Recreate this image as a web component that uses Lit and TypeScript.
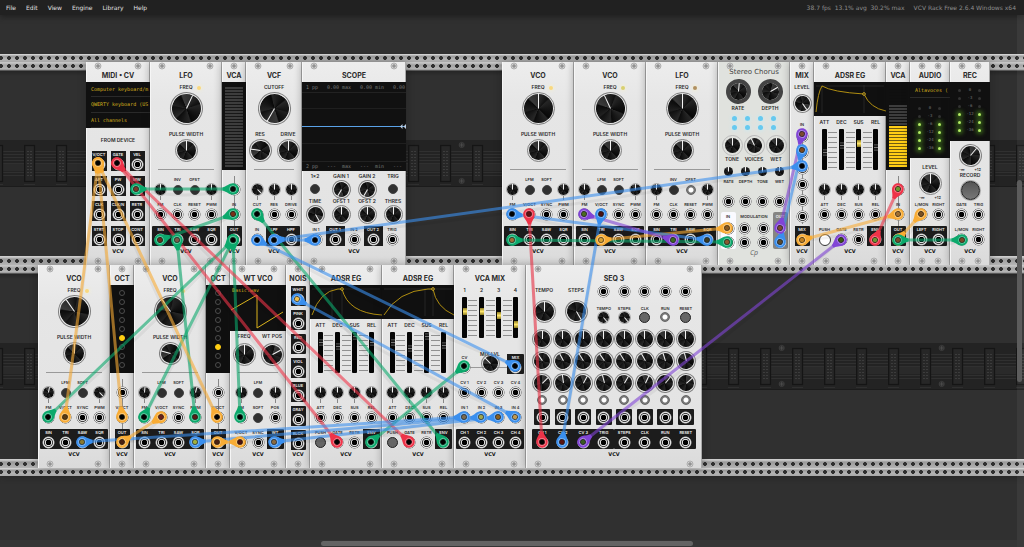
import { LitElement, html, svg, css, nothing } from "lit";
import { customElement } from "lit/decorators.js";

type T = unknown;

const BLUE = "#3a8fee";
const GREEN = "#0ca96c";
const RED = "#ee3348";
const ORANGE = "#f8ac35";
const PURPLE = "#8144d6";

/* x1, y1, x2, y2, colour, light in first plug, light in second plug */
type Cable = [number, number, number, number, string, string?, string?];
const cables: Cable[] = [
  [136, 189, 233, 189, GREEN, "#7a3a2a", "#0a0a0a"],
  [160, 240, 233, 214, GREEN, "#6a2a1a", "#7a3018"],
  [177, 240, 195, 417, GREEN, "#7a5a4a", "#5a1a14"],
  [233, 240, 48, 417, GREEN],
  [233, 240, 144, 417, GREEN],
  [233, 240, 240, 417, GREEN],
  [257, 214, 443, 442, GREEN],
  [371, 442, 464, 366, GREEN],
  [117, 163, 337, 442, RED],
  [117, 163, 409, 442, RED],
  [98, 163, 65, 417, ORANGE, "#000", "#5a3a10"],
  [98, 163, 217, 417, ORANGE],
  [98, 163, 122, 417, ORANGE],
  [122, 442, 161, 417, ORANGE, "#4a2010", "#6a2018"],
  [217, 442, 240, 442, ORANGE, "#4a2010", "#4a1010"],
  [297, 299, 515, 417, BLUE, "#f0c050", "#c09a50"],
  [257, 240, 515, 366, BLUE],
  [274, 240, 802, 166, BLUE],
  [274, 240, 315, 240, BLUE],
  [82, 442, 464, 417, BLUE, "#8a7a30", "#7a6a50"],
  [195, 442, 481, 417, BLUE, "#a0b040", "#a0a850"],
  [274, 442, 498, 417, BLUE, "#8a6a40", "#8a6020"],
  [529, 214, 542, 442, RED, "#5a1010", "#000"],
  [601, 214, 562, 442, BLUE, "#4a1010", "#5a1410"],
  [512, 240, 727, 242, GREEN, "#a07038", "#8a5a30"],
  [601, 240, 727, 228, ORANGE, "#d8a030", "#8a5a20"],
  [512, 214, 707, 240, BLUE, "#000", "#3a3a20"],
  [584, 214, 673, 240, PURPLE, "#4a6a20", "#3a6a20"],
  [780, 242, 802, 150, BLUE, "#5a4a30", "#7a4a20"],
  [780, 228, 802, 134, PURPLE, "#7a4a30", "#7a4a30"],
  [802, 240, 898, 214, ORANGE, "#c08020", "#a07030"],
  [898, 189, 875, 240, RED, "#6a9a30", "#6a9a30"],
  [898, 240, 921, 214, ORANGE, "#7a5020", "#7a5020"],
  [898, 240, 962, 240, GREEN, "#7a4a28", "#7a4a28"],
  [841, 240, 583, 442, PURPLE, "#3a5a10", "#3a5a20"],
];

const plug = (x: number, y: number, deg: number, color: string, light = "#000") => svg`
  <g transform="translate(${x} ${y}) rotate(${deg})">
    <path d="M0 -5.8 C4 -5.8 6 -2.8 10.500 -1.6 L10.500 1.6 C6 2.8 4 5.8 0 5.8 A5.8 5.8 0 0 1 0 -5.8Z" fill=${color}/>
    <circle r="3.4" fill="none" stroke="#fff" stroke-opacity=".35" stroke-width="1"/>
    <circle r="2.6" fill=${light} stroke="#1b1b1b" stroke-width=".6"/>
  </g>`;

const label = (t: string, cls = "") => html`<span class="label ${cls}">${t}</span>`;
const knob = (size: string, angle: number, name = "Attenuator") => html`
  <input class="knob ${size}" type="range" min="-150" max="150" .value=${String(angle)}
    aria-label=${name} style="rotate:${angle}deg" />`;
const jack = () => html`<span class="jack"></span>`;
const button = (cls: string, name: string) => html`<button class="push ${cls}" aria-label=${name}></button>`;
const cell = (name: string, body: T, cls = "") => html`
  <div class="cell ${cls}">${label(name)}<div class="body">${body}</div></div>`;
const jacks = (names: string[], cls = "") => names.map((n, i) =>
  cell(n, jack(), cls + (cls && i === 0 ? " first" : "") + (cls && i === names.length - 1 ? " last" : "")));
const screws = (n: number) => html`<div class="screws ${n === 1 ? "one" : ""}">
  ${Array.from({ length: n }, () => html`<svg viewBox="0 0 8 8"><circle cx="4" cy="4" r="3" fill="#d2d2d2" stroke="#9d9d9d" stroke-width=".7"/><path d="M4 2V6M2 4H6" stroke="#777" stroke-width=".9"/></svg>`)}</div>`;

const panel = (hp: string, title: string, face: T, ports: T, n = 2) => html`
  <section class="module ${hp}" aria-label=${title}>
    ${screws(n)}
    <h2>${title}</h2>
    <div class="face">${face}</div>
    ${ports}
    <div class="logo">VCV</div>
    ${screws(n)}
  </section>`;

const freq = (a: number, led: string) => html`
  <div class="freq"><span></span>${label("FREQ", "mid")}<i class="led ${led}"></i></div>
  <div class="well">${knob("xl", a, "Frequency")}</div>`;
const rule = () => html`<hr />`;

const osc = (title: string, a: number, pw: number, led: string, o: { lfo?: boolean; am?: number; pm?: number; lit?: boolean } = {}) =>
  panel("w9", title, html`
    ${freq(a, led)}
    ${label("PULSE WIDTH", "mid second")}
    <div class="well small">${knob("l", pw, "Pulse width")}</div>
    ${rule()}`, html`
    <div class="ports c4">
      ${cell("", knob("s", o.am ?? 0), "stem")}
      ${cell(o.lfo ? "INV" : "LFM", button("dark", o.lfo ? "Invert" : "Linear FM"))}
      ${cell(o.lfo ? "OFST" : "SOFT", button(o.lit ? "lit" : "dark", o.lfo ? "Offset" : "Soft sync"))}
      ${cell("", knob("s", o.pm ?? 0), "stem")}
      ${jacks(o.lfo ? ["FM", "CLK", "RESET", "PWM"] : ["FM", "V/OCT", "SYNC", "PWM"])}
      ${jacks(["SIN", "TRI", "SAW", "SQR"], "out")}
    </div>`);

const vca = (lit: boolean) => panel("w3", "VCA", html`
  <div class="screen tall"><div class="meter ${lit ? "on" : ""}"></div></div>`, html`
  <div class="ports c1 wire">${cell("", jack())}${cell("IN", jack())}${cell("OUT", jack(), "out first last")}</div>`, 1);

const oct = (sel: number) => panel("w3", "OCT", html`
  <div class="screen tall octaves">
    ${Array.from({ length: 9 }, (_, i) => html`<button class="oct ${i === sel ? "sel" : ""}" aria-label="Octave ${4 - i}"></button>`)}
  </div>`, html`
  <div class="ports c1 wire">${cell("", jack())}${cell("V/OCT", jack())}${cell("OUT", jack(), "out first last")}</div>`, 1);

const slider = (name: string, v: number, lit = false) => html`
  <label class="slide"><span class="label mid">${name}</span>
    <input class="fader ${lit ? "lit" : ""}" type="range" min="0" max="100" .value=${String(v)} /></label>`;
const ticks = () => html`<div class="ticks"><i></i><i></i><i></i></div>`;

const adsr = (curve: string, dot: [number, number], marks: number[], v: number[], litIdx: number, push: string) => panel("w9", "ADSR EG", html`
  <div class="screen env">
    <svg viewBox="0 0 72 34">
      <path d="M2 4H70" stroke="#333" stroke-width=".6"/>
      ${marks.map((m) => svg`<path d="M${m} 3V31" stroke="#333" stroke-width=".6"/>`)}
      <path d=${curve} fill="none" stroke="#b08e10" stroke-width="1"/>
      <circle cx=${dot[0]} cy=${dot[1]} r="1.4" fill="#463a10" stroke="#e5bd2a" stroke-width=".7"/>
    </svg>
  </div>
  <div class="faders eg">${ticks()}${["ATT", "DEC", "SUS", "REL"].map((n, i) => slider(n, v[i], i === litIdx))}</div>`, html`
  <div class="ports c4">
    ${[0, 0, 0, 0].map(() => cell("", knob("s", 0), "stem"))}
    ${jacks(["ATT", "DEC", "SUS", "REL"])}
    ${cell("PUSH", button(push, "Push"))}${jacks(["GATE", "RETR"])}${cell("ENV", jack(), "out first last")}
  </div>`);

const ladder = (from: number) => html`<div class="ladder">
  ${["0", "-3", "-6", "-12", "-24", "-36"].map((t, i) => html`<div><i class=${i >= from ? "hot" : ""}></i><span>${t}</span><i class=${i >= from ? "hot" : ""}></i></div>`)}</div>`;

const menus = ["File", "Edit", "View", "Engine", "Library", "Help"];

@customElement("app-root")
export class AppRoot extends LitElement {
  static styles = css`
    :host { display: flex; flex-direction: column; position: relative; min-height: 100vh; overflow: hidden; background: #303030; color: #2c2c2c; font-family: Inter, "Open Sans", sans-serif; font-size: 5px; }
    * { box-sizing: border-box; }
    button, input { margin: 0; padding: 0; border: 0; font: inherit; }
    .bar { display: flex; align-items: center; height: 15px; padding: 0 8px 0 1px; background: #212121; box-shadow: 0 1px 6px #1b1b1b; color: #e0e0e0; font: 6px/15px "DejaVu Sans", sans-serif; }
    .bar nav { display: flex; flex: 1; }
    .bar nav button { padding: 0 5px; background: none; color: inherit; }
    .stats { display: flex; gap: 9px; color: #8e8e8e; white-space: pre; }
    .rack { padding-top: 39px; }
    .rail { height: 8px; background: radial-gradient(circle at 4px 4px, #303030 0 1.6px, #30303000 2.2px) -3px 0 / 8px 8px repeat-x, linear-gradient(#d0d0d0 0 1px, #969696 2px, #b4b4b4 5px, #a8a8a8); }
    .rail.under { box-shadow: 0 2px 5px #2228; }
    .row { position: relative; display: flex; height: 203px; background:
      radial-gradient(circle at 4px 4px, #303030 0 1.6px, #30303000 2.2px) -3px 0 / 8px 8px repeat-x,
      radial-gradient(circle at 4px 4px, #303030 0 1.6px, #30303000 2.2px) -3px 195px / 8px 8px repeat-x,
      linear-gradient(#c4c4c4 0 1px, #a2a2a2 3px, #b6b6b6 7px, #8a8a8a 8px, #262626 9px, #303030 14px, #303030 194px, #ccc 194px 195px, #999 197px, #b6b6b6 203px); }
    .row.a { padding-left: 86px; }
    .row.b { padding-left: 38px; }
    .backplane { position: absolute; inset: 0; width: 100%; height: 100%; }
    .gap { flex: 0 0 96px; }
    .module { position: relative; display: flex; flex-direction: column; flex: none; height: 203px; background: linear-gradient(#ededed, #e6e6e6 20%, #e3e3e3 80%, #dadada); border-left: 1px solid #f6f6f6; border-right: 1px solid #a9a9a9; box-shadow: 0 0 8px #1115; }
    .w3 { width: 24px; } .w5 { width: 40px; } .w7 { width: 56px; } .w8 { width: 64px; } .w9 { width: 72px; } .w13 { width: 104px; } .w22 { width: 176px; }
    .screws { display: flex; justify-content: space-between; height: 8px; padding: 0 7px; }
    .screws.one { justify-content: center; }
    .screws svg { width: 8px; height: 8px; }
    h2 { margin: 0; height: 12px; font-size: 7px; line-height: 11px; font-weight: 700; text-align: center; white-space: nowrap; }
    .face { flex: 1; display: flex; flex-direction: column; min-height: 0; }
    .logo { height: 11px; font: 700 5px/10px "DejaVu Sans", sans-serif; text-align: center; color: #111; }
    .label { display: block; height: 7px; font-size: 4px; line-height: 7px; font-weight: 600; text-align: center; white-space: nowrap; }
    .mid { font-size: 5px; }
    .second { margin-top: 5px; }
    .second0 { margin-top: 2px; }
    .freq { display: grid; grid-template-columns: 1fr auto 1fr; align-items: center; margin-top: 2px; }
    .led { width: 4px; height: 4px; margin-left: 4px; border-radius: 50%; background: #e8d890; box-shadow: 0 0 4px #fff3b8; }
    .led.amber { background: #b09060; } .led.gold { background: #f8d880; } .led.lime { background: #d8d070; }
    .well { display: grid; place-items: center; height: 35px; }
    .well.small { height: 25px; }
    .pair { display: grid; grid-template-columns: 28px 28px; justify-content: center; }
    hr { width: 56px; height: 1px; margin: 6px auto 0; border: 0; background: #999; }
    .w7 hr { width: 40px; }
    .knob { appearance: none; display: block; flex: none; border-radius: 50%; outline: 1px solid #808080; outline-offset: 1px; background:
      linear-gradient(#f4f4f4, #f4f4f4) 50% 0 / 1px 50% no-repeat,
      conic-gradient(#2c2c2c, #111 12%, #252525 14%, #141414 26%, #080808 37%, #262626 39%, #0c0c0c 55%, #272727 57%, #111 70%, #202020 72%, #0b0b0b 86%, #3a3a3a 88%, #2c2c2c); }
    .knob::-webkit-slider-thumb { appearance: none; width: 0; height: 0; }
    .knob.xl { width: 29px; height: 29px; } .knob.l { width: 19px; height: 19px; } .knob.m { width: 15px; height: 15px; }
    .knob.s { width: 11px; height: 11px; outline-offset: 0; outline-color: #aaa; }
    .knob.flat { outline-color: #bbb; outline-offset: 2px; }
    .knob.grey { width: 17px; height: 17px; outline: 4px solid #444; outline-offset: 0; }
    .knob.tiny { width: 9px; height: 9px; outline: 0; }
    .jack { display: block; flex: none; width: 13px; height: 13px; background: radial-gradient(circle, #000 0 2.5px, #ddd 3px 3.4px, #444 3.9px 4.2px, #e2e2e2 4.8px 5.2px, #888 5.8px, #8880 6.4px); }
    .push { display: block; flex: none; width: 10px; height: 10px; border-radius: 50%; background: #303030; border: 1px solid #444; }
    .push.lit { background: radial-gradient(circle, #fff 0 2px, #777 3px); border-color: #666; }
    .push.white { width: 12px; height: 12px; background: #fff; border-color: #333; }
    .push.grey { width: 11px; height: 11px; background: #666; border-color: #222; }
    .push.rec { width: 19px; height: 19px; background: linear-gradient(#555, #777); border-color: #222; box-shadow: 0 0 0 1px #aaa; }
    .ports { position: relative; display: grid; justify-content: center; row-gap: 5px; }
    .c1 { grid-template-columns: 15px; } .c2 { grid-template-columns: repeat(2, 17px); } .c3 { grid-template-columns: repeat(3, 17px); } .c4 { grid-template-columns: repeat(4, 17px); } .c5 { grid-template-columns: repeat(5, 19px); }
    .boxed { grid-template-columns: repeat(3, 15px); column-gap: 4px; }
    .big { grid-template-columns: repeat(4, 26px); row-gap: 0; margin-bottom: 3px; }
    .cell { display: grid; grid-template-rows: 7px 13px; justify-items: center; min-width: 0; }
    .cell .label { width: 30px; margin: 0 -8px; }
    .body { display: grid; place-items: center; width: 100%; height: 13px; }
    .big .cell { grid-template-rows: 7px 18px; } .big .body { height: 18px; }
    .big .label { font-size: 5px; }
    .stem { background: linear-gradient(#888, #888) 50% 100% / 1px 4px no-repeat; margin-bottom: -4px; padding-bottom: 4px; }
    .wire { background: linear-gradient(#888, #888) 50% 0 / 1px 70px no-repeat; }
    .out { background: #1c1c1c; color: #f0f0f0; }
    .first { border-radius: 1px 0 0 1px; } .last { border-radius: 0 1px 1px 0; }
    .screen { flex: none; overflow: hidden; margin: 0 -1px; background: #101010; color: #d6b21d; font: 5px/14px "DejaVu Sans Mono", monospace; }
    .midi { display: grid; height: 46px; grid-auto-rows: 1fr; padding-left: 5px; }
    .midi button { background: none; color: inherit; text-align: left; white-space: nowrap; border-bottom: 1px solid #2a2a2a; }
    .from { margin: 9px 0 0; }
    .tall { height: 88px; padding: 5px 3px 4px; }
    .meter { height: 80px; background: repeating-linear-gradient(#3d3d3d 0 2px, #181818 2px 3px); }
    .meter.on { background: linear-gradient(#101010 0 18px, #10101000 18px), linear-gradient(#ffce1600 39px, #ffce16 39px), repeating-linear-gradient(#3d3d3d 0 2px, #181818 2px 3px); -webkit-mask: repeating-linear-gradient(#000 0 2px, #0006 2px 3px); }
    .octaves { display: flex; flex-direction: column; align-items: center; gap: 3px; }
    .oct { width: 6px; height: 6px; flex: none; border-radius: 50%; background: none; border: 1px solid #4c4c4c; }
    .oct.sel { background: #ffcf13; border-color: #ffcf13; }
    .scope { display: flex; flex-direction: column; justify-content: space-between; height: 89px; color: #777; line-height: 10px; background: linear-gradient(#0000 44px, #5aa2e8 44px 45px, #0000 45px), linear-gradient(#0000 10px, #222 10px 11px, #0000 11px 26px, #1f1f1f 26px 27px, #0000 27px 61px, #1f1f1f 61px 62px, #0000 62px 79px, #222 79px 80px, #0000 80px), #111; }
    .scope div { display: flex; justify-content: space-between; padding: 0 1px 0 4px; white-space: pre; }
    .scope svg { width: 6px; height: 5px; align-self: flex-end; }
    .env { height: 34px; }
    .env svg { display: block; width: 72px; height: 34px; }
    .faders { position: relative; display: grid; grid-template-columns: repeat(4, 17px); justify-content: center; }
    .eg { margin-top: 3px; }
    .mixf { margin-top: 2px; }
    .slide { position: relative; display: grid; grid-template-rows: 10px 41px; justify-items: center; }
    .fader { appearance: none; writing-mode: vertical-lr; direction: rtl; width: 5px; height: 41px; background: #050505; border-radius: 1px; }
    .fader::-webkit-slider-thumb { appearance: none; width: 4px; height: 7px; background: linear-gradient(#444, #111 40%, #777 50%, #111 60%, #444); }
    .fader.lit::-webkit-slider-thumb { background: linear-gradient(#8a7a20, #ffe66a 50%, #8a7a20); }
    .ticks { position: absolute; top: 13px; left: 50%; width: 52px; height: 36px; margin-left: -26px; display: flex; justify-content: space-between; padding: 0 4px; }
    .ticks i { width: 9px; background: repeating-linear-gradient(#909090 0 1px, #0000 1px 5px); }
    .wave { height: 46px; }
    .wave svg { display: block; width: 56px; height: 46px; }
    .wave text { font: 5px "DejaVu Sans Mono", monospace; fill: #d6b21d; }
    .pair .wt { height: 28px; }
    .wt ~ .wt + hr, .wthr hr { margin-top: 4px; }
    .noise { display: grid; grid-template-columns: 15px; grid-auto-rows: 20px; gap: 4px; justify-content: center; margin-top: 1px; }
    .mixrow { position: relative; display: grid; grid-template-columns: 17px 34px 17px; justify-content: center; margin: 16px 0 5px; background: linear-gradient(#999, #999) 50% 13px / 52px 1px no-repeat; }
    .tall-label { display: grid; grid-template-rows: 5px 17px; justify-items: center; margin-top: -3px; }
    .seqtop { display: grid; grid-template-columns: 3fr 5fr; height: 43px; padding: 0 5px; }
    .seqtop .pair { grid-template-columns: 32px 32px; justify-content: start; margin: 2px 0 0 -4px; }
    .seqtop .tools { display: grid; grid-template-columns: repeat(5, 1fr); grid-template-rows: 20px 7px 13px; justify-items: center; }
    .seq { display: grid; grid-template-columns: repeat(8, 1fr); grid-template-rows: 22px 22px 21px 14px 20px; place-items: center; padding: 0 5px; }
    .seq .knob { width: 16px; height: 16px; }
    .sq { display: grid; place-items: center; width: 16px; height: 16px; background: #1c1c1c; border-radius: 1px; }
    .seqout { display: grid; grid-template-columns: repeat(8, 1fr); padding: 0 5px; margin-top: 2px; }
    .chorus { background: #e0e2de; }
    .chorus h3 { margin: -2px 0 0; height: 8px; text-align: center; font: 7px/8px "DejaVu Sans", sans-serif; white-space: nowrap; color: #444; }
    .chorus .big2 { display: grid; grid-template-columns: 32px 32px; justify-content: center; justify-items: center; }
    .chorus .big2 .well { height: 29px; padding-top: 2px; }
    .chorus .leds { display: grid; grid-template-columns: repeat(4, 13px); grid-auto-rows: 9px; place-items: center; justify-content: center; }
    .chorus .leds i { width: 5px; height: 5px; border-radius: 50%; background: #66c9ef; box-shadow: 0 0 4px #b9ecff; }
    .chorus .three { display: grid; grid-template-columns: repeat(3, 22px); justify-content: center; }
    .chorus .three .well { height: 24px; padding-top: 2px; }
    .chorus .four { display: grid; grid-template-columns: repeat(4, 17px); justify-content: center; justify-items: center; }
    .chorus .four .well { height: 15px; padding-top: 2px; }
    .chorus .four .jack { margin-top: 10px; }
    .io { display: grid; grid-template-columns: 15px 37px 15px; justify-content: center; height: 38px; margin-top: 4px; }
    .io > div { display: grid; grid-template-rows: 9px 14px 14px; justify-items: center; align-items: center; border-radius: 2px; }
    .io .in { background: #fafaff; } .io .outs { background: #858583; color: #eee; }
    .io .mod { grid-template-columns: 1fr 1fr; }
    .io .mod .label { grid-column: 1 / 3; }
    .cp { height: 9px; text-align: center; font: italic 7px/9px "Open Sans", sans-serif; color: #666; }
    .stack { display: grid; grid-auto-rows: 16px; place-items: center; margin-bottom: -3px; background: linear-gradient(#888, #888) 50% 8px / 1px 90px no-repeat; }
    .ladder { display: grid; grid-auto-rows: 8px; justify-content: center; color: #777; }
    .ladder div { display: grid; grid-template-columns: 4px 16px 4px; align-items: center; text-align: center; font-size: 4px; line-height: 8px; height: 8px; }
    .ladder i { width: 3px; height: 3px; border-radius: 50%; background: #333; }
    .ladder i.hot { background: #b6ee66; box-shadow: 0 0 4px 2px #3c6a1b; }
    .audio { height: 76px; }
    .audio p { margin: 0 0 6px; padding-left: 5px; height: 16px; line-height: 16px; white-space: nowrap; border-bottom: 1px solid #2a2a2a; }
    .rec { height: 59px; padding-top: 4px; }
    .minmax { display: flex; justify-content: space-between; height: 4px; padding: 0 8px; font-size: 4px; line-height: 3px; font-weight: 600; }
    .lvl { margin-top: 6px; }
    .gain { margin-top: 2px; }
    .face .well.recw { height: 22px; }
    .cables { position: absolute; top: 0; left: 0; width: 100%; height: 100%; pointer-events: none; }
    .vscroll { position: absolute; top: 15px; right: 0; bottom: 0; width: 7px; background: #ffffff0d; }
    .vscroll i { position: absolute; top: 31%; left: 0; width: 5px; height: 38%; border-radius: 3px; background: #5c5c5c; }
    .hscroll { position: absolute; left: 0; right: 7px; bottom: 0; height: 7px; background: #ffffff08; }
    .hscroll i { position: absolute; left: 31.6%; top: 1px; width: 36.5%; height: 5px; border-radius: 3px; background: #646464; }
  `;

  private backplane(id: string) {
    return html`<svg class="backplane">
      <defs>
        <pattern id="slot${id}" x="24" y="0" width="32" height="203" patternUnits="userSpaceOnUse">
          <rect x="0.7" y="83.500" width="9.800" height="36" fill="#272727" stroke="#151515" stroke-width="1.4"/>
          <path d="M4 89V115M7 89V115" stroke="#505050" stroke-dasharray="1 2"/>
          <path d="M0 122.500H11" stroke="#2f2f2f"/>
        </pattern>
        <pattern id="bolt${id}" width="160" height="203" patternUnits="userSpaceOnUse">
          ${[83, 119].map((y) => svg`<circle cx="141.7" cy=${y} r="2.6" fill="#2a2a2a" stroke="#444" stroke-width=".6"/><path d="M141.7 ${y - 2}V${y + 2}M139.7 ${y}H143.7" stroke="#555" stroke-width=".7"/>`)}
        </pattern>
      </defs>
      <rect y="78" width="100%" height="47" fill="#232323"/>
      ${[89, 92, 95, 98, 101, 110, 113].map((y) => svg`<rect y=${y} width="100%" height="1" fill="#303030"/>`)}
      <rect y="102" width="100%" height="7" fill="#2a2a2a"/>
      <rect y="124" width="100%" height="1" fill="#1b1b1b"/>
      <rect y="78" width="100%" height="48" fill="url(#slot${id})"/>
      <rect y="78" width="100%" height="48" fill="url(#bolt${id})"/>
    </svg>`;
  }

  private midi() {
    return panel("w8", "MIDI • CV", html`
      <div class="screen midi"><button>Computer keyboard/m</button><button>QWERTY keyboard (US</button><button>All channels</button></div>
      ${label("FROM DEVICE", "from mid")}`, html`
      <div class="ports boxed">
        ${["V/OCT", "GATE", "VEL", "AFT", "PW", "MW", "CLK", "CLK/N", "RETR", "STRT", "STOP", "CONT"].map((n) => cell(n, jack(), "out"))}
      </div>`);
  }

  private vcf() {
    return panel("w7", "VCF", html`
      <div class="freq"><span></span>${label("CUTOFF", "mid")}<span></span></div>
      <div class="well">${knob("xl", -150, "Cutoff")}</div>
      <div class="pair second">${label("RES", "mid")}${label("DRIVE", "mid")}
        <div class="well small">${knob("l", -82, "Resonance")}</div><div class="well small">${knob("l", 0, "Drive")}</div></div>
      ${rule()}`, html`
      <div class="ports c3">
        ${[135, 0, 0].map((a) => cell("", knob("s", a), "stem"))}
        ${jacks(["CUT", "RES", "DRIVE"])}
        ${cell("IN", jack())}${jacks(["LPF", "HPF"], "out")}
      </div>`);
  }

  private scope() {
    return panel("w13", "SCOPE", html`
      <div class="screen scope"><div><span>1 pp</span><span>0.00 max</span><span>0.00 min</span><span>0.00</span></div>
        <svg viewBox="0 0 6 5"><path d="M0 2.500L2.500 0V5ZM6 0L3.500 2.500L6 5Z" fill="#b9cbe0"/></svg>
        <div><span>2 pp</span><span>---  max</span><span>---  min</span><span>--- </span></div></div>`, html`
      <div class="ports big">
        ${cell("1x2", button("dark", "1x2"))}${cell("GAIN 1", knob("m", -150, "Gain 1"))}${cell("GAIN 2", knob("m", -150, "Gain 2"))}${cell("TRIG", button("dark", "Trigger"))}
        ${cell("TIME", knob("m", 150, "Time"))}${cell("OFST 1", knob("m", 0, "Offset 1"))}${cell("OFST 2", knob("m", 0, "Offset 2"))}${cell("THRES", knob("m", 0, "Threshold"))}
      </div>
      <div class="ports c5">${cell("IN 1", jack())}${cell("OUT 1", jack(), "out")}${cell("IN 2", jack())}${cell("OUT 2", jack(), "out")}${cell("TRIG", jack())}</div>`);
  }

  private chorus() {
    return html`<section class="module w9 chorus" aria-label="Stereo Chorus">
      ${screws(2)}
      <h3>Stereo Chorus</h3>
      <div class="face">
        <div class="big2"><div class="well">${knob("grey", 5, "Rate")}</div><div class="well">${knob("grey", 60, "Depth")}</div>${label("RATE", "mid")}${label("DEPTH", "mid")}</div>
        <div class="leds second0">${Array.from({ length: 8 }, () => html`<i></i>`)}</div>
        <div class="three">
          ${[0, -25, 0].map((a) => html`<div class="well">${knob("m flat", a)}</div>`)}
          ${label("TONE", "mid")}${label("VOICES", "mid")}${label("WET", "mid")}
        </div>
        <div class="four">
          ${[0, 0, 0, 0].map((a) => html`<div class="well">${knob("tiny", a)}</div>`)}
          ${["RATE", "DEPTH", "TONE", "WET"].map((n) => label(n))}
          ${[0, 0, 0, 0].map(() => jack())}
        </div>
        <div class="io">
          <div class="in">${label("IN")}${jack()}${jack()}</div>
          <div class="mod">${label("MODULATION")}${jack()}${jack()}${jack()}${jack()}</div>
          <div class="outs">${label("OUT")}${jack()}${jack()}</div>
        </div>
      </div>
      <div class="cp">Cp</div>
      ${screws(2)}
    </section>`;
  }

  private mix() {
    return panel("w3", "MIX", html`
      <div class="freq"><span></span>${label("LEVEL", "mid")}<span></span></div>
      <div class="well small">${knob("m", 145, "Level")}</div>
      ${label("IN", "second")}
      <div class="stack">${Array.from({ length: 6 }, () => jack())}</div>`, html`
      <div class="ports c1">${cell("MIX", jack(), "out first last")}</div>`, 1);
  }

  private audio() {
    return panel("w5", "AUDIO", html`
      <div class="screen audio"><p>Altavoces (</p>${ladder(2)}</div>
      ${label("LEVEL", "mid lvl")}
      <div class="well small">${knob("l", 0, "Level")}</div>
      <div class="minmax"><span>-∞</span><span>+12</span></div>`, html`
      <div class="ports c2">${jacks(["L/MON", "RIGHT"])}${jacks(["LEFT", "RIGHT"], "out")}</div>`);
  }

  private rec() {
    return panel("w5", "REC", html`
      <div class="screen rec">${ladder(3)}</div>
      <div class="well small gain">${knob("l", 40, "Gain")}</div>
      <div class="minmax"><span>-∞</span><span>+12</span></div>
      ${label("RECORD", "mid")}
      <div class="well recw">${button("rec", "Record")}</div>`, html`
      <div class="ports c2">${jacks(["GATE", "TRIG", "L/MON", "RIGHT"])}</div>`);
  }

  private wavetable() {
    return panel("w7", "WT VCO", html`
      <div class="screen wave"><svg viewBox="0 0 56 46"><text x="2" y="7">Basic.wav</text><path d="M1 25L27 10V43L53 27" fill="none" stroke="#dcb41c"/></svg></div>
      <div class="pair second0">${label("FREQ", "mid")}${label("WT POS", "mid")}
        <div class="well wt">${knob("l", 0, "Frequency")}</div><div class="well wt">${knob("l", 62, "Wavetable position")}</div></div>
      <div class="wthr">${rule()}</div>`, html`
      <div class="ports c3">
        ${cell("", knob("s", 0), "stem")}${cell("LFM", button("dark", "Linear FM"))}${cell("", knob("s", 0), "stem")}
        ${cell("FM", jack())}${cell("SOFT", button("dark", "Soft sync"))}${cell("POS", jack())}
        ${cell("V/OCT", jack())}${cell("SYNC", jack())}${cell("WT", jack(), "out first last")}
      </div>`);
  }

  private noise() {
    return panel("w3", "NOIS", html`
      <div class="noise">${["WHIT", "PINK", "RED", "VIOL", "BLUE", "GRAY", "BLCK"].map((n) => cell(n, jack(), "out first last"))}</div>`, nothing, 1);
  }

  private vcaMix() {
    return panel("w9", "VCA MIX", html`
      <div class="faders mixf">${ticks()}${[67, 67, 55, 28].map((v, i) => slider(String(i + 1), v, true))}</div>
      <div class="mixrow">${cell("CV", jack())}<div class="tall-label">${label("MIX LVL", "mid")}${knob("m", -45, "Mix level")}</div>${cell("MIX", jack(), "out first last")}</div>`, html`
      <div class="ports c4">${jacks(["CV 1", "CV 2", "CV 3", "CV 4"])}${jacks(["IN 1", "IN 2", "IN 3", "IN 4"])}${jacks(["CH 1", "CH 2", "CH 3", "CH 4"], "out")}</div>`);
  }

  private seq() {
    const angles = [0, 0, 0, 0, 0, 0, 0, 0, -35, -28, -32, -35, -32, -30, -18, -15, 45, -8, 28, -15, 30, 25, 38, 48];
    return panel("w22", "SEQ 3", html`
      <div class="seqtop">
        <div class="pair">${label("TEMPO", "mid")}${label("STEPS", "mid")}
          <div class="well small">${knob("l", 0, "Tempo")}</div><div class="well small">${knob("l", 150, "Steps")}</div></div>
        <div class="tools">
          ${[0, 1, 2, 3, 4].map(() => jack())}
          ${["TEMPO", "STEPS", "CLK", "RUN", "RESET"].map((n) => label(n))}
          ${knob("s", 140)}${knob("s", 140)}${button("grey", "Clock")}${button("lit", "Run")}${button("grey", "Reset")}
        </div>
      </div>
      <div class="seq">
        ${angles.map((a, i) => knob("m", a, `CV ${Math.floor(i / 8) + 1} step ${(i % 8) + 1}`))}
        ${Array.from({ length: 8 }, (_, i) => button("lit", `Step ${i + 1}`))}
        ${Array.from({ length: 8 }, () => html`<div class="sq">${jack()}</div>`)}
      </div>`, html`
      <div class="seqout">${jacks(["CV 1", "CV 2", "CV 3", "TRIG"], "out")}${jacks(["STEPS", "CLK", "RUN", "RESET"], "out")}</div>`);
  }

  render() {
    return html`
      <header class="bar">
        <nav>${menus.map((m) => html`<button>${m}</button>`)}</nav>
        <div class="stats"><span>38.7 fps  13.1% avg  30.2% max</span><span>VCV Rack Free 2.6.4 Windows x64</span></div>
      </header>
      <main class="rack">
        <div class="rail"></div>
        <div class="row a">
          ${this.backplane("a")}
          ${this.midi()}
          ${osc("LFO", 25, 0, "gold", { lfo: true })}
          ${vca(false)} ${this.vcf()} ${this.scope()}
          <div class="gap"></div>
          ${osc("VCO", 0, 0, "gold")}
          ${osc("VCO", -25, 0, "lime")}
          ${osc("LFO", 0, 0, "amber", { lfo: true, lit: true })}
          ${this.chorus()} ${this.mix()}
          ${adsr("M2 30Q4 10 8 4Q18 10 50 12Q56 26 72 29", [50, 12], [8, 50], [40, 62, 68, 55], 2, "white")}
          ${vca(true)} ${this.audio()} ${this.rec()}
        </div>
        <div class="row b">
          ${this.backplane("b")}
          ${osc("VCO", -35, 0, "gold", { am: 10, pm: 135 })}
          ${oct(5)}
          ${osc("VCO", -35, -75, "gold", { am: 5, pm: 15 })}
          ${oct(6)}
          ${this.wavetable()} ${this.noise()}
          ${adsr("M2 30Q10 6 28 4H32Q38 28 72 30", [32, 4], [22, 32], [78, 68, 98, 80], -1, "grey")}
          ${adsr("M2 30Q16 6 46 4H51Q54 22 72 30", [51, 4], [43, 51], [80, 62, 98, 72], -1, "grey")}
          ${this.vcaMix()} ${this.seq()}
        </div>
        <div class="rail under"></div>
      </main>
      <svg class="cables" aria-hidden="true">
        ${cables.map(([x1, y1, x2, y2]) => svg`<path d="M${x1} ${y1}Q${(x1 + x2) / 2} ${(y1 + y2) / 2 + 12} ${x2} ${y2}" fill="none" stroke="#000" stroke-opacity=".05" stroke-width="3"/>`)}
        ${cables.map(([x1, y1, x2, y2, c]) => svg`<line x1=${x1} y1=${y1} x2=${x2} y2=${y2} stroke=${c} stroke-opacity=".6" stroke-width="3" stroke-linecap="round"/>`)}
        ${cables.map(([x1, y1, x2, y2, c, l1, l2]) => {
          const a = (Math.atan2(y2 - y1, x2 - x1) * 180) / Math.PI;
          return svg`${plug(x1, y1, a, c, l1)}${plug(x2, y2, a + 180, c, l2)}`;
        })}
      </svg>
      <div class="hscroll"><i></i></div>
      <div class="vscroll"><i></i></div>
    `;
  }
}
